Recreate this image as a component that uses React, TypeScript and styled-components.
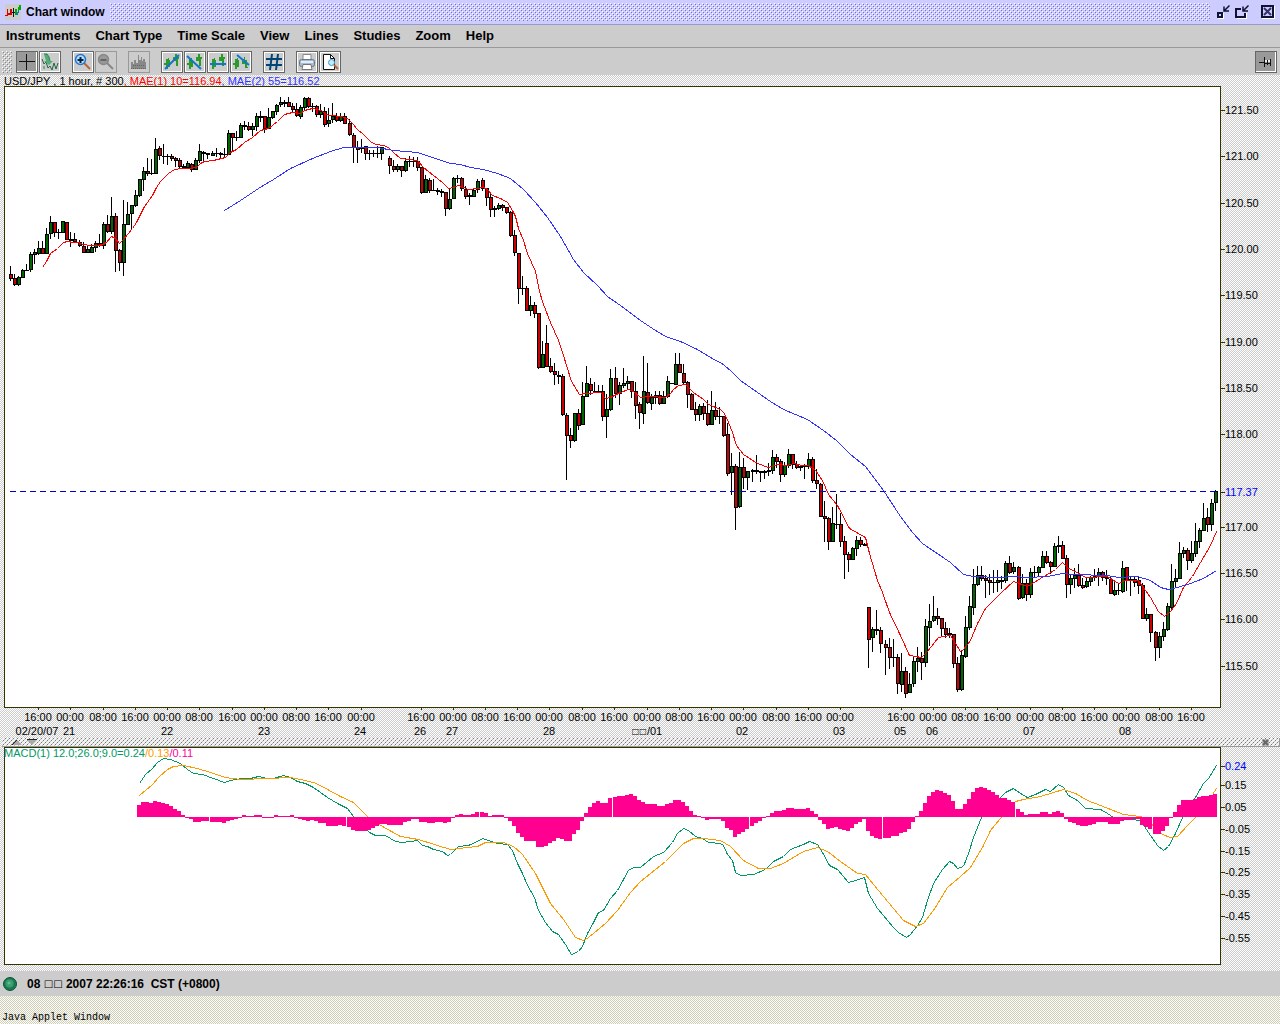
import React from "react";
import styled, { createGlobalStyle, css } from "styled-components";

/* ---------- textures ---------- */

const tile = (w: number, h: number, body: string) =>
  `url("data:image/svg+xml,${encodeURIComponent(
    `<svg xmlns="http://www.w3.org/2000/svg" width="${w}" height="${h}" shape-rendering="crispEdges">${body}</svg>`
  )}")`;

const dot = (x: number, y: number, fill: string) =>
  `<rect x="${x}" y="${y}" width="1" height="1" fill="${fill}"/>`;

const bumps = (light: string, dark: string) =>
  tile(4, 4, dot(0, 0, light) + dot(1, 1, dark) + dot(2, 2, light) + dot(3, 3, dark));

const greyDither = tile(2, 2, dot(0, 0, "#ccc") + dot(1, 1, "#ccc"));
const sandDither = tile(4, 2, dot(0, 0, "#ccc") + dot(1, 1, "#ccc") + dot(2, 0, "#ccc") + dot(3, 1, "#ccc") + dot(1, 0, "#ffc") + dot(2, 1, "#ffc"));
const hatch = tile(4, 4, dot(3, 0, "#777") + dot(2, 1, "#bbb") + dot(1, 2, "#777") + dot(0, 3, "#bbb"));

/* ---------- layout ---------- */

const Page = createGlobalStyle`
  body { margin: 0; background: #fff ${sandDither}; }
  * { box-sizing: border-box; }
`;

const Window = styled.div`
  display: flex;
  flex-direction: column;
  min-height: 100vh;
  font-family: "Liberation Sans", Arial, sans-serif;
  color: #000;
`;

const TitleBar = styled.header`
  display: flex;
  align-items: center;
  gap: 5px;
  height: 25px;
  padding: 0 4px 0 5px;
  background: #ccccff;
  border-bottom: 1px solid #9999cc;
`;

const Title = styled.h1`
  margin: 0;
  font-size: 12px;
  line-height: 24px;
  font-weight: bold;
`;

const TitleBumps = styled.div`
  flex: 1;
  height: 18px;
  background: ${bumps("#fff", "#7777b0")};
`;

const WindowControls = styled.div`
  display: flex;
  gap: 3px;
`;

const WindowButton = styled.button`
  width: 16px;
  height: 16px;
  padding: 0;
  border: 0;
  background: none;
  svg { display: block; }
  &:last-child { margin-left: 7px; }
`;

const MenuBar = styled.nav`
  display: flex;
  gap: 15px;
  height: 23px;
  padding: 0 6px;
  background: #ccc;
  border-bottom: 1px solid #999;
`;

const MenuItem = styled.button`
  padding: 0;
  border: 0;
  background: none;
  font: bold 13px/22px "Liberation Sans", Arial, sans-serif;
  color: #000;
`;

const ToolBar = styled.div`
  display: flex;
  align-items: center;
  gap: 10px;
  height: 27px;
  padding: 0 2px;
  background: #ccc;
`;

const Grip = styled.div`
  width: 10px;
  height: 22px;
  margin-right: -6px;
  background: ${bumps("#fff", "#888")};
`;

const ToolGroup = styled.div`
  display: flex;
  gap: 1px;
  padding-right: 1px;
  &:last-child { margin-left: auto; }
`;

const ToolButton = styled.button<{ $pressed?: boolean }>`
  display: grid;
  place-items: center;
  width: 22px;
  height: 22px;
  padding: 0;
  border: 1px solid #666;
  background: ${(p) => (p.$pressed ? "#999" : "#ccc")};
  box-shadow: inset 1px 1px #fff, inset -1px -1px #fff;
  ${(p) =>
    p.$pressed &&
    css`
      box-shadow: inset -1px -1px #fff;
    `}
  &:disabled {
    border-color: #999;
    box-shadow: none;
  }
  svg { display: block; }
`;

const ChartArea = styled.main`
  background: #fff ${greyDither};
`;

const ChartSvg = styled.svg`
  display: block;
  width: 100%;
  height: auto;
  font: 11px "Liberation Sans", Arial, sans-serif;
`;

const Splitter = styled.div`
  display: flex;
  justify-content: space-between;
  align-items: center;
  height: 9px;
  margin-left: 2px;
  padding: 0 10px;
  border-bottom: 1px solid #999;
  border-right: 1px solid #999;
  background: #f2f2f2 ${hatch};
  svg { display: block; }
`;

const StatusBar = styled.div`
  display: flex;
  align-items: center;
  gap: 9px;
  height: 25px;
  padding: 0 2px;
  background: #ccc;
  font-size: 12px;
  font-weight: bold;
  white-space: pre;
`;

const Boxes = styled.span`
  font: 10px/1 "DejaVu Sans", sans-serif;
  vertical-align: 1px;
`;

const AppletNote = styled.footer`
  padding: 15px 2px 0;
  font: 10px/13px "Liberation Mono", monospace;
`;

/* ---------- market data: high, open/close top, open/close bottom, low, direction ---------- */

const bars = `266 274 278 281 r,274 278 284 286 r,276 277 284 286 g,269 270 277 278 g,264 270 270 271 r,252 254 269 272 g,249 252 254 264 g,241 248 253 255 g,241 248 253 254 r,228 234 253 254 g,
216 222 233 239 g,222 222 232 237 r,229 232 232 239 r,221 221 232 233 g,222 222 239 240 r,232 239 240 247 r,233 239 241 243 r,240 242 245 247 r,242 246 252 253 r,245 249 252 253 g,
244 247 252 253 g,241 243 247 252 g,234 243 245 247 r,222 224 245 249 g,215 224 231 233 r,197 216 231 234 g,213 216 250 272 r,249 250 262 271 r,200 224 262 276 g,202 214 224 225 g,
205 205 213 229 g,190 195 205 207 g,179 179 195 197 g,167 171 179 191 g,158 171 173 176 r,159 173 173 175 r,138 149 173 174 g,146 148 155 160 r,144 156 156 164 r,154 156 156 165 r,
154 156 158 161 r,157 158 160 167 r,158 160 166 168 r,164 166 167 168 r,161 163 167 169 g,163 164 169 172 r,158 160 169 170 g,144 151 160 163 g,151 152 153 161 r,153 153 154 159 r,
151 153 155 156 g,148 153 153 157 r,152 153 154 159 r,148 154 154 157 r,130 133 154 155 g,133 133 137 151 r,131 137 137 141 r,123 125 137 138 g,121 125 126 130 r,122 126 129 131 r,
123 126 129 136 g,113 116 126 131 g,111 116 117 122 r,116 116 128 133 r,108 117 128 129 g,111 111 117 119 g,104 105 111 115 g,97 102 104 107 g,100 102 103 107 r,97 102 106 107 r,
103 106 109 112 r,103 109 115 117 r,105 107 116 119 g,97 98 107 110 g,97 98 106 108 r,103 106 106 112 r,105 106 114 117 r,104 111 114 118 g,107 111 124 127 r,108 120 123 127 g,
103 116 119 123 g,113 116 120 122 r,113 116 120 122 g,113 116 123 124 r,119 123 134 136 r,133 135 147 163 r,141 147 149 163 r,139 147 148 153 r,146 146 153 160 r,150 153 153 160 r,
150 153 153 157 r,146 153 153 158 r,147 147 153 160 g,-,156 158 165 174 r,160 166 169 172 r,164 166 169 172 g,166 166 170 177 r,158 161 170 172 g,156 161 161 167 r,
157 161 161 167 r,157 161 167 171 r,167 167 192 194 r,175 179 192 193 g,178 180 190 193 r,179 190 190 191 r,188 190 191 195 r,189 191 192 197 r,192 192 208 216 r,189 199 208 210 g,
177 178 198 199 g,175 178 178 183 r,177 178 188 191 r,186 189 196 199 r,193 195 196 205 r,188 190 196 197 g,179 181 189 193 g,178 180 188 191 r,188 188 197 206 r,193 197 209 217 r,
206 208 209 217 r,203 205 208 210 g,204 205 207 211 r,207 207 212 214 r,211 212 235 237 r,230 235 252 256 r,253 253 288 304 r,276 288 288 295 r,286 288 310 311 r,296 305 310 316 g,
302 305 313 318 r,313 313 367 369 r,341 354 367 368 g,325 343 366 367 r,358 366 371 373 r,363 371 374 385 r,371 375 376 384 r,374 376 414 416 r,413 415 435 480 r,428 435 440 448 r,
413 413 440 442 g,409 413 425 430 r,382 396 424 425 g,366 383 396 397 g,378 384 390 395 r,382 391 391 392 r,385 391 391 393 r,385 391 416 421 r,394 409 416 438 g,369 378 409 411 g,
367 378 393 398 r,382 385 393 405 g,368 383 385 388 g,376 381 383 389 g,381 381 391 398 r,382 391 405 419 r,402 404 412 429 r,356 391 413 424 g,363 392 402 404 r,394 397 403 410 g,
391 395 397 404 r,391 395 403 405 r,391 396 403 404 g,376 381 396 398 g,383 383 383 384 r,353 364 384 385 g,353 364 372 373 r,364 373 382 384 r,381 382 394 408 r,393 394 409 410 r,
402 409 414 421 r,404 406 414 421 g,403 406 413 420 r,400 413 424 426 r,391 410 424 425 g,402 410 416 420 r,407 416 416 424 r,416 416 435 437 r,423 434 473 476 r,453 466 472 495 g,
464 466 507 530 r,452 467 506 508 g,458 467 477 489 r,471 471 477 490 g,469 470 471 482 r,455 470 471 474 r,471 471 472 482 r,470 471 472 479 r,463 470 471 476 r,450 457 470 474 g,
454 457 461 468 r,459 461 474 482 r,462 465 474 477 g,449 454 465 468 g,454 454 464 469 r,461 464 467 469 r,466 466 467 471 r,464 466 466 479 r,453 459 466 469 g,457 459 480 483 r,
469 480 483 489 r,483 484 516 517 r,501 516 518 542 r,517 518 541 550 r,507 523 541 542 g,494 524 524 529 r,513 524 541 547 r,536 541 554 579 r,552 554 559 572 r,547 548 559 560 g,
536 540 548 556 g,537 540 544 547 r,543 544 545 546 r,607 607 639 668 r,627 629 637 652 g,610 629 630 635 r,627 630 643 653 r,640 644 647 675 r,638 647 657 669 r,639 657 657 667 r,
654 657 683 694 r,653 671 684 692 g,667 671 693 698 r,673 684 692 693 g,657 661 683 687 g,647 658 661 672 g,652 658 662 680 r,619 626 662 667 g,604 621 627 646 g,596 616 620 622 g,
608 616 618 625 r,618 618 628 637 r,622 628 634 638 r,628 633 634 638 r,634 634 663 668 r,657 663 689 692 r,651 655 689 691 g,616 627 656 658 g,596 606 627 630 g,569 584 607 615 g,
566 575 584 586 g,566 575 578 581 r,575 578 580 598 r,574 580 582 595 r,570 582 582 593 r,570 580 582 592 g,576 580 581 589 r,561 563 580 583 g,556 563 572 574 r,562 567 571 574 g,
566 567 598 600 r,574 583 597 599 g,579 583 594 601 r,568 572 594 598 g,566 572 572 577 r,566 567 572 576 g,551 556 567 568 g,551 556 562 564 r,561 562 566 574 r,543 546 566 567 g,
536 545 546 553 r,541 545 558 559 r,555 558 584 598 r,574 578 584 594 g,568 575 578 588 g,564 575 585 587 r,578 585 587 589 r,578 581 586 588 g,576 577 581 586 g,569 576 577 581 r,
568 572 576 586 g,571 572 577 581 r,570 577 578 585 r,577 579 593 594 r,580 590 594 596 g,584 590 590 595 r,561 568 591 593 g,567 567 580 591 r,577 579 580 596 r,577 579 582 587 r,
577 580 585 594 r,583 585 618 619 r,608 614 618 621 g,614 614 632 642 r,631 632 647 661 r,632 636 647 658 g,622 629 636 641 g,603 606 629 631 g,564 581 607 609 g,569 578 581 587 g,
542 553 578 579 g,547 550 553 558 g,548 550 560 570 r,541 553 560 563 g,523 541 553 557 g,528 530 541 548 g,503 518 530 531 g,508 517 524 532 r,499 503 524 531 g,490 491 502 511 g`
  .split(",")
  .map((row) => row.trim().split(" "));

const barX = (i: number) => Math.round(10 + 4.03 * i);

const fastAverage =
  "42,267 46,261 50,253 57,248 63,242 67,241 73,242 78,242 83,244 90,245 100,245 106,242 111,236 115,238 119,243 123,239 127,234 132,228 136,222 140,214 144,206 152,195 156,187 160,181 168,173 174,169 182,168 190,168 196,167 200,163 204,161 213,160 225,157 230,152 236,149 244,142 252,137 260,130 268,128 277,121 284,114 292,112 300,113 304,110 312,108 321,110 325,114 330,115 341,116 347,118 352,123 357,129 363,134 370,141 375,144 383,145 388,147 393,152 400,158 408,159 417,160 423,167 433,175 442,182 448,188 453,187 458,185 463,187 468,189 477,188 483,187 487,189 492,195 500,198 507,202 512,210 515,216 518,228 523,240 527,253 535,271 539,291 543,304 550,322 558,340 563,355 567,368 571,381 579,394 585,393 600,392 605,398 610,397 620,392 628,389 633,391 640,397 650,396 665,397 670,393 673,389 678,385 685,384 693,392 703,399 708,404 720,409 724,413 728,422 732,432 736,445 743,454 757,463 768,467 777,464 787,465 793,463 802,465 808,465 815,470 822,480 828,494 837,505 849,528 865,537 869,553 877,580 882,592 889,612 900,635 909,655 921,657 927,651 938,637 950,635 960,651 963,649 970,640 977,623 985,608 1000,593 1013,581 1027,586 1040,578 1047,574 1055,569 1062,562 1068,568 1075,571 1085,577 1107,576 1118,583 1125,580 1138,580 1150,597 1158,611 1164,616 1170,611 1176,603 1183,587 1192,576 1200,562 1210,545 1216,531";

const slowAverage =
  "224,210 240,200 258,188 273,179 290,168 312,158 330,151 343,147 377,147 393,150 417,152 432,157 450,163 460,164 470,167 483,169 497,173 510,178 523,189 535,202 547,217 560,236 573,259 583,272 597,285 607,296 620,305 640,320 652,328 665,336 680,341 697,349 710,357 723,364 732,372 740,380 757,392 770,401 783,409 807,419 823,430 836,440 850,454 865,466 883,490 900,516 912,532 922,543 950,562 963,574 973,576 1000,577 1013,576 1027,577 1047,576 1062,573 1073,574 1107,575 1118,577 1137,576 1150,580 1160,587 1168,589 1177,587 1190,583 1203,578 1216,570";

const macdLine =
  "139,783 145,774 152,768 157,762 163,758 170,759 180,763 187,769 193,773 202,774 213,778 224,782 230,780 242,778 250,778 258,776 267,778 273,778 283,775 290,777 297,781 305,783 313,787 320,792 327,797 337,803 347,808 353,816 369,832 375,835 385,835 395,841 402,842 417,840 422,845 427,846 433,849 442,851 447,855 450,854 458,846 468,845 477,841 482,838 488,840 497,843 507,844 512,850 517,863 522,873 527,885 534,897 538,910 545,922 552,931 558,934 565,944 571,954 578,951 582,946 587,933 593,922 598,912 603,910 610,898 617,890 623,879 628,870 633,867 640,867 653,856 663,852 672,842 677,833 683,828 688,830 695,836 702,838 708,842 720,843 723,845 727,854 732,860 735,872 740,875 753,874 765,869 773,861 783,856 790,849 803,844 809,841 817,844 822,852 829,865 837,869 848,882 855,880 864,877 868,893 877,908 893,927 898,932 906,937 910,934 917,925 922,917 927,900 933,883 942,869 949,861 953,863 957,868 963,866 968,853 973,837 981,817 1000,797 1005,792 1013,788 1020,793 1027,797 1035,794 1045,789 1050,791 1058,784 1063,787 1068,795 1077,800 1085,808 1100,809 1107,813 1113,817 1140,820 1148,832 1157,845 1163,850 1168,846 1175,833 1182,817 1195,797 1203,783 1208,778 1216,765";

const signalLine =
  "139,795 152,784 158,777 167,769 173,766 183,765 197,768 210,772 225,777 240,779 267,778 290,777 300,779 313,782 322,786 327,789 340,796 353,802 360,809 368,817 382,826 400,836 418,839 437,845 450,849 467,847 477,846 485,842 503,842 513,846 522,854 535,873 550,903 563,919 575,937 583,940 588,937 605,923 617,910 630,892 640,881 665,861 683,843 693,838 703,838 720,840 730,846 743,860 758,868 770,868 783,863 803,851 817,847 827,851 840,861 857,873 865,874 873,884 903,920 915,926 923,923 935,907 947,887 960,876 970,867 982,847 990,830 1000,818 1015,801 1023,799 1040,796 1063,789 1075,793 1087,800 1100,805 1123,814 1140,816 1147,820 1162,834 1170,837 1177,836 1187,825 1195,817 1212,794 1216,788";

const HISTOGRAM_START = 32;
const histogram = [
  12, 15, 15, 14, 16, 15, 14, 13, 11, 8, 6, 2, 0, -2, -5, -5, -4, -4, -5, -5, -5, -6, -4, -3, -2, -1, 2, 1,
  1, 2, 2, 0, -1, -1, 2, 1, 1, 1, 2, 0, -2, -3, -4, -3, -4, -6, -6, -9, -9, -9, -8, -9, -10, -13, -14, -14,
  -14, -13, -11, -9, -7, -7, -8, -8, -8, -8, -5, -4, -2, -2, -5, -5, -6, -6, -5, -5, -6, -5, -1, 2, 3, 2, 2,
  3, 5, 5, 4, 1, 2, 2, 2, 0, -4, -9, -16, -20, -24, -24, -24, -30, -30, -29, -26, -24, -21, -22, -24, -24,
  -17, -13, -4, 4, 10, 14, 16, 14, 14, 19, 20, 21, 21, 22, 23, 21, 17, 15, 13, 13, 13, 11, 11, 13, 14, 17,
  17, 15, 11, 6, 2, 1, -1, -3, -2, -2, -2, -4, -11, -13, -20, -17, -15, -12, -9, -6, -4, -1, 1, 4, 6, 6, 7,
  9, 9, 8, 8, 8, 9, 6, 3, -3, -7, -12, -11, -10, -12, -13, -14, -11, -7, -5, -2, -14, -19, -21, -22, -21,
  -21, -19, -19, -16, -15, -12, -5, 1, 6, 14, 21, 25, 27, 26, 24, 22, 16, 8, 8, 13, 18, 25, 29, 30, 29, 27,
  25, 22, 19, 19, 17, 15, 8, 5, 2, 3, 3, 3, 5, 5, 3, 5, 6, 4, -2, -5, -6, -8, -9, -9, -8, -7, -5, -5, -5,
  -7, -7, -7, -4, -3, -3, -2, -2, -8, -10, -12, -17, -17, -14, -9, -1, 5, 12, 17, 17, 17, 18, 20, 21, 21,
  22, 23,
];

const hourAt16 = [38, 135, 232, 328, 421, 517, 614, 711, 808, 901, 997, 1094, 1191];
const hourAt00 = [70, 167, 264, 361, 453, 549, 647, 743, 840, 933, 1030, 1126];
const hourAt08 = [103, 199, 296, 485, 582, 679, 776, 965, 1062, 1159];
const hours: [number, string][] = [
  ...hourAt16.map((x): [number, string] => [x, "16:00"]),
  ...hourAt00.map((x): [number, string] => [x, "00:00"]),
  ...hourAt08.map((x): [number, string] => [x, "08:00"]),
].sort((a, b) => a[0] - b[0]);

const days: [number, string][] = [
  [37, "02/20/07"], [69, "21"], [167, "22"], [264, "23"], [360, "24"], [420, "26"], [452, "27"],
  [549, "28"], [742, "02"], [839, "03"], [900, "05"], [932, "06"], [1029, "07"], [1125, "08"],
];

const prices: [number, string][] = [
  [110, "121.50"], [156, "121.00"], [203, "120.50"], [249, "120.00"], [295, "119.50"], [342, "119.00"],
  [388, "118.50"], [434, "118.00"], [492, "117.37"], [527, "117.00"], [573, "116.50"], [619, "116.00"],
  [666, "115.50"],
];

const levels: [number, string][] = [
  [766, "0.24"], [785, "0.15"], [807, "0.05"], [829, "-0.05"], [851, "-0.15"], [872, "-0.25"],
  [894, "-0.35"], [916, "-0.45"], [938, "-0.55"],
];

/* ---------- charts ---------- */

const Curve = ({ points, color }: { points: string; color: string }) => (
  <polyline points={points} fill="none" stroke={color} strokeWidth={1} transform="translate(.5 .5)" shapeRendering="crispEdges" />
);

const ValueAxis = ({ marks, current }: { marks: [number, string][]; current: string }) => (
  <g>
    {marks.map(([y, label]) => (
      <g key={label}>
        <rect x={1221} y={y} width={4} height={1} fill="#333300" />
        <text x={1225} y={y + 4} fill={label === current ? "#0000ff" : "#000"}>{label}</text>
      </g>
    ))}
  </g>
);

const PriceChart = () => (
  <ChartSvg viewBox="0 75 1280 663" role="img" aria-label="USD/JPY hourly candles">
    <text x={4} y={85}>
      USD/JPY , 1 hour, # 300<tspan fill="#f00">, MAE(1) 10=116.94</tspan>
      <tspan fill="#33f">, MAE(2) 55=116.52</tspan>
    </text>
    <rect x={4.5} y={86.5} width={1216} height={621} fill="#fff" stroke="#333300" />
    <g shapeRendering="crispEdges">
      {bars.map(([high, top, bottom, low, dir], i) => {
        if (!top) return null;
        const x = barX(i);
        const height = +bottom - +top + 1;
        return (
          <g key={i}>
            <rect x={x} y={+high} width={1} height={+low - +high} />
            <rect x={x - 1} y={+top} width={4} height={height} />
            {height > 2 && (
              <rect x={x} y={+top + 1} width={2} height={height - 2} fill={dir === "g" ? "#006600" : "#cc0000"} />
            )}
          </g>
        );
      })}
      <line x1={10} x2={1216} y1={491.5} y2={491.5} stroke="#0000cc" strokeDasharray="6 4" />
    </g>
    <Curve points={fastAverage} color="#f00" />
    <Curve points={slowAverage} color="#33f" />
    <ValueAxis marks={prices} current="117.37" />
    <g textAnchor="middle">
      {hours.map(([x, label]) => (
        <g key={x}>
          <rect x={x} y={708} width={1} height={2} fill="#333300" />
          <text x={x} y={721}>{label}</text>
        </g>
      ))}
      {days.map(([x, label]) => (
        <text key={x} x={x} y={735}>{label}</text>
      ))}
      <text x={647} y={735}>
        <tspan fontFamily="DejaVu Sans" fontSize={8} dy={-1}>□□</tspan>
        <tspan dy={1}>/01</tspan>
      </text>
    </g>
  </ChartSvg>
);

const MacdChart = () => (
  <ChartSvg viewBox="0 747 1280 224" role="img" aria-label="MACD">
    <rect x={4.5} y={747.5} width={1216} height={217} fill="#fff" stroke="#333300" />
    <Curve points={macdLine} color="#009966" />
    <Curve points={signalLine} color="#ff9900" />
    <g fill="#ff0090" shapeRendering="crispEdges">
      {histogram.map((v, i) => (
        <rect key={i} x={barX(i + HISTOGRAM_START) - 2} y={v > 0 ? 817 - v : 817} width={4} height={Math.max(1, Math.abs(v))} />
      ))}
    </g>
    <text x={4} y={757} fill="#009966">
      MACD(1) 12.0;26.0;9.0=0.24<tspan fill="#ff9900">/0.13</tspan>
      <tspan fill="#ff0099">/0.11</tspan>
    </text>
    <ValueAxis marks={levels} current="0.24" />
  </ChartSvg>
);

/* ---------- icons ---------- */

const Icon = ({ size = 18, children }: { size?: number; children: React.ReactNode }) => (
  <svg width={size} height={size} viewBox={`0 0 ${size} ${size}`} fill="none" aria-hidden="true">
    {children}
  </svg>
);

const AppIcon = () => (
  <Icon size={16}>
    <g shapeRendering="crispEdges">
      <path fill="#ccc" d="M0 0h16v16H0z" />
      <path fill="#d00" d="M0 11h2v1H0zM2 5h1v7H2zM3 9h2v2H3zM5 5h2v6H5z" />
      <path fill="#111" d="M8 4h1v9H8zM7 8h3v1H7z" />
      <path fill="#0a0" d="M10 5h2v6h-2zM12 8h1v3h-1zM14 1h2v5h-2zM13 3h1v5h-1z" />
      <path fill="#07b" d="M11 9h2v2h-2zM13 6h1v3h-1z" />
    </g>
  </Icon>
);

const RestoreGlyph = ({ big }: { big?: boolean }) => (
  <Icon size={16}>
    <g shapeRendering="crispEdges">
      <path fill="#fff" d={big ? "M3 14h10v1H3zM12 9h1v6h-1z" : "M3 14h6v1H3zM8 9h1v6H8z"} />
      <path
        fill="#113"
        fillRule="evenodd"
        d={big ? "M1 4h6v2H3v6h7V9h2v5H1z" : "M2 8h6v6H2zM4 10v2h2v-2z"}
      />
    </g>
    <path stroke="#113" strokeWidth={1.500} d="M14.500 1.500l-5 5M9 2.500V7h5" />
  </Icon>
);

const CloseGlyph = () => (
  <Icon size={16}>
    <g shapeRendering="crispEdges">
      <path fill="#fff" d="M2 14h13v1H2zM14 2h1v13h-1z" />
      <path fill="#113" fillRule="evenodd" d="M1 1h13v13H1zM3 3v9h9V3z" />
      <path fill="#ccf" d="M3 3h9v9H3z" />
    </g>
    <path stroke="#336" strokeWidth={2} d="M4 4l7 7M11 4l-7 7" />
  </Icon>
);

const Magnifier = ({ plus, off }: { plus?: boolean; off?: boolean }) => (
  <Icon>
    <path stroke={off ? "#888" : "#b63"} strokeWidth={2} d="M10 10l6 6" />
    <circle cx={6.500} cy={6.500} r={5} fill={off ? "#999" : "#bdf"} stroke={off ? "#888" : "#27c"} strokeWidth={1.500} />
    <path stroke={off ? "#666" : "#024"} strokeWidth={2} d={plus ? "M3.500 7h6M6.500 4v6" : "M3.500 7h6"} />
  </Icon>
);

const TrendIcon = ({ line, low }: { line: string; low?: boolean }) => (
  <Icon>
    <g shapeRendering="crispEdges" fill="#2a9a2a">
      <path d="M3 6h2V5h1v2h1v7H5v2H3v-4H1v-2h2z" />
      <path d={low ? "M10 6h2V4h1v3h2v7h1v1h-3v-4h-3z" : "M10 4h2V1h2v3h2v2h-1v7h-2V8h-3z"} />
    </g>
    <path stroke="#17c" strokeWidth={2} d={line} />
  </Icon>
);

const Crosshair = () => (
  <Icon>
    <path stroke="#111" d="M1 8.500h16M8.500 1v16" />
  </Icon>
);

const TickChart = () => (
  <Icon>
    <path stroke="#264" d="M1 6l2 5 2-2 2 6 2-2 2 4 2-7 2 6 2-6" />
    <path fill="#5a7" d="M3 1h3l2 3 1 4h3l-4 4-5-4h2z" />
    <path stroke="#285" d="M3 1h3l2 3 1 4M3 13v3" />
  </Icon>
);

const VolumeIcon = () => (
  <Icon>
    <path fill="#888" d="M1 16V9h2v2h1V7h2v3h2V2h1v5h2V4h1v4h1V6h2v3h1v7z" />
    <path stroke="#666" strokeDasharray="1 1" d="M1 15.500h15M3 12.500h12" />
  </Icon>
);

const HashIcon = () => (
  <Icon>
    <path stroke="#047" strokeWidth={2} d="M7 1L5 17M13 1l-2 16M1 6h16M1 12h16" />
  </Icon>
);

const PrinterIcon = () => (
  <Icon>
    <path fill="#fff" stroke="#888" d="M5 1.500h8V7H5z" />
    <rect x={1.500} y={6.500} width={15} height={7} rx={2} fill="#abc" stroke="#678" />
    <path stroke="#def" strokeWidth={2} d="M3 9h12" />
    <path fill="#fff" stroke="#777" d="M5 11.500h8l1 5H4z" />
  </Icon>
);

const PreviewIcon = () => (
  <Icon>
    <path fill="#fff" stroke="#111" d="M2.500 1.500h7l4 4v11h-11z" />
    <path stroke="#111" d="M9.500 1.500v4h4" />
    <circle cx={10.500} cy={9.500} r={3} fill="#bef" stroke="#49c" />
    <path stroke="#b63" strokeWidth={2} d="M13 12l4 4" />
  </Icon>
);

const PinIcon = () => (
  <Icon>
    <g shapeRendering="crispEdges">
      <path fill="#eee" d="M8 7h6v2H8z" />
      <path fill="#111" d="M2 9h5v1H2zM7 4h1v10H7zM8 10h2v1H8zM10 7h1v5h-1zM11 10h2v1h-2zM13 6h1v7h-1z" />
    </g>
  </Icon>
);

const StatusLamp = () => (
  <Icon size={16}>
    <circle cx={8} cy={8} r={6.500} fill="#197a50" stroke="#0a5535" />
    <circle cx={7.500} cy={7.500} r={4} fill="#3b9d70" />
    <circle cx={7} cy={7} r={1.500} fill="#66b890" />
  </Icon>
);

/* ---------- window ---------- */

const menus = ["Instruments", "Chart Type", "Time Scale", "View", "Lines", "Studies", "Zoom", "Help"];

type Tool = { name: string; icon: React.ReactNode; pressed?: boolean; disabled?: boolean };

const toolGroups: Tool[][] = [
  [
    { name: "Crosshair", icon: <Crosshair />, pressed: true },
    { name: "Tick chart", icon: <TickChart /> },
  ],
  [
    { name: "Zoom in", icon: <Magnifier plus /> },
    { name: "Zoom out", icon: <Magnifier off />, disabled: true },
  ],
  [{ name: "Volume", icon: <VolumeIcon />, disabled: true }],
  [
    { name: "Trend line up", icon: <TrendIcon line="M2 16L16 2" /> },
    { name: "Trend line down", icon: <TrendIcon line="M1 3l14 13" /> },
    { name: "Horizontal line", icon: <TrendIcon line="M1 11h16" /> },
    { name: "Line segment", icon: <TrendIcon line="M5 2l12 10" low /> },
  ],
  [{ name: "Grid", icon: <HashIcon /> }],
  [
    { name: "Print", icon: <PrinterIcon /> },
    { name: "Print preview", icon: <PreviewIcon /> },
  ],
  [{ name: "Pin", icon: <PinIcon />, pressed: true }],
];

export default function App() {
  return (
    <>
      <Page />
      <Window>
        <TitleBar>
          <AppIcon />
          <Title>Chart window</Title>
          <TitleBumps />
          <WindowControls>
            <WindowButton aria-label="Minimize"><RestoreGlyph /></WindowButton>
            <WindowButton aria-label="Restore"><RestoreGlyph big /></WindowButton>
            <WindowButton aria-label="Close"><CloseGlyph /></WindowButton>
          </WindowControls>
        </TitleBar>
        <MenuBar>
          {menus.map((m) => (
            <MenuItem key={m}>{m}</MenuItem>
          ))}
        </MenuBar>
        <ToolBar>
          <Grip />
          {toolGroups.map((group, g) => (
            <ToolGroup key={g}>
              {group.map((t) => (
                <ToolButton key={t.name} aria-label={t.name} $pressed={t.pressed} disabled={t.disabled}>
                  {t.icon}
                </ToolButton>
              ))}
            </ToolGroup>
          ))}
        </ToolBar>
        <ChartArea>
          <PriceChart />
          <Splitter>
            <svg width={26} height={6} aria-hidden="true">
              <path fill="#aaa" d="M0 6l5-5 5 5zM15 1h10l-5 5z" />
              <path stroke="#222" fill="none" d="M0 6l5-5M15 .5h10" />
            </svg>
            <svg width={7} height={7} aria-hidden="true">
              <path fill="#bbb" d="M0 0h7v7H0z" />
              <path stroke="#666" strokeWidth={2} d="M1 1l5 5M6 1L1 6" />
            </svg>
          </Splitter>
          <MacdChart />
        </ChartArea>
        <StatusBar>
          <StatusLamp />
          <span>08 <Boxes>□□</Boxes> 2007 22:26:16  CST (+0800)</span>
        </StatusBar>
        <AppletNote>Java Applet Window</AppletNote>
      </Window>
    </>
  );
}
